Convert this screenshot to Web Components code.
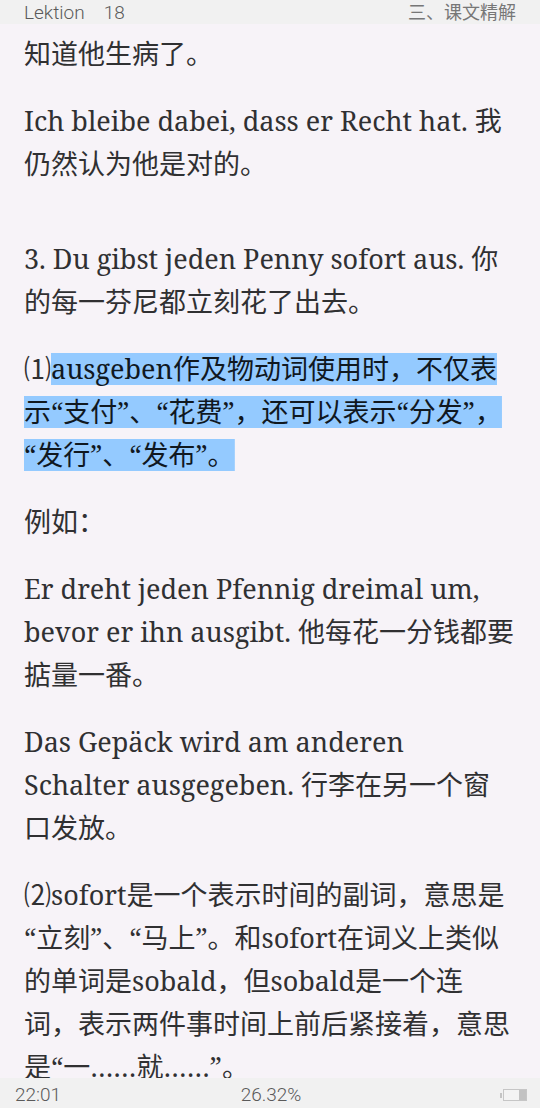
<!DOCTYPE html>
<html lang="zh-CN">
<head>
<meta charset="utf-8">
<meta name="viewport" content="width=device-width, initial-scale=1">
<title>Lektion 18</title>
<style>
    body {
        margin: 0;
    }
</style>
</head>
<body>
<reader-page>
    <reader-bar slot="top">
        <span>Lektion　18</span>
        <span slot="end">三、课文精解</span>
    </reader-bar>

    <reader-paragraph>知道他生病了。</reader-paragraph>
    <reader-paragraph>Ich bleibe dabei, dass er Recht hat. 我仍然认为他是对的。</reader-paragraph>
    <reader-paragraph section>3. Du gibst jeden Penny sofort aus. 你的每一芬尼都立刻花了出去。</reader-paragraph>
    <reader-paragraph>⑴<reader-highlight>ausgeben作及物动词使用时，不仅表示“支付”、“花费”，还可以表示“分发”，“发行”、“发布”。</reader-highlight></reader-paragraph>
    <reader-paragraph>例如：</reader-paragraph>
    <reader-paragraph>Er dreht jeden Pfennig dreimal um, bevor er ihn ausgibt. 他每花一分钱都要掂量一番。</reader-paragraph>
    <reader-paragraph>Das Gepäck wird am anderen Schalter ausgegeben. 行李在另一个窗口发放。</reader-paragraph>
    <reader-paragraph>⑵sofort是一个表示时间的副词，意思是“立刻”、“马上”。和sofort在词义上类似的单词是sobald，但sobald是一个连词，表示两件事时间上前后紧接着，意思是“一……就……”。</reader-paragraph>

    <reader-status slot="bottom">
        <time>22:01</time>
        <span slot="progress">26.32%</span>
        <battery-icon slot="end"></battery-icon>
    </reader-status>
</reader-page>

<script>
class ReaderPage extends HTMLElement {
    constructor() {
        super();
        this.attachShadow({ mode: "open" });
        this.shadowRoot.innerHTML = /*html*/ `
        <style>
            :host {
                --bar-background: #f1f1f1;
                --bar-color: #777;
                --bar-light-color: #5a5a5a;
                --mark-background: #94caff;

                display: flex;
                flex-direction: column;
                height: 100vh;
                background-color: #f7f3f8;
                color: #303032;
                font-family: "Noto Serif", "Droid Serif", "Noto Sans CJK SC", serif;
                font-size: 27px;
                line-height: 43px;
            }
            main {
                flex: 1;
                min-height: 0;
                overflow: hidden;
                padding: 8px 24px 0;
            }
        </style>
        <slot name="top"></slot>
        <main><slot></slot></main>
        <slot name="bottom"></slot>
        `;
    }
}

class ReaderBar extends HTMLElement {
    constructor() {
        super();
        this.attachShadow({ mode: "open" });
        this.shadowRoot.innerHTML = /*html*/ `
        <style>
            :host {
                display: block;
                background-color: var(--bar-background);
                color: var(--bar-color);
                font-family: Roboto, "Noto Sans CJK SC", sans-serif;
                font-size: 18px;
                line-height: 22px;
            }
            header {
                display: flex;
                justify-content: space-between;
                padding: 2px 24px 0;
            }
            .title {
                color: var(--bar-light-color);
                font-size: 19px;
                font-weight: 300;
            }
        </style>
        <header>
            <div class="title"><slot></slot></div>
            <slot name="end"></slot>
        </header>
        `;
    }
}

class ReaderParagraph extends HTMLElement {
    constructor() {
        super();
        this.attachShadow({ mode: "open" });
        this.shadowRoot.innerHTML = /*html*/ `
        <style>
            :host {
                display: block;
                margin-bottom: 24px;
            }
            :host([section]) {
                padding-top: 28px;
            }
            p {
                margin: 0;
            }
        </style>
        <p><slot></slot></p>
        `;
    }
}

class ReaderHighlight extends HTMLElement {
    constructor() {
        super();
        this.attachShadow({ mode: "open" });
        // the band is shorter than the font box, so it is drawn as a gradient
        // no whitespace around <mark>: it would show up inside the line
        this.shadowRoot.innerHTML = /*html*/ `<style>
            :host {
                display: inline;
            }
            mark {
                background: linear-gradient(var(--mark-background), var(--mark-background)) center / 100% 32px no-repeat;
                -webkit-box-decoration-break: clone;
                box-decoration-break: clone;
                color: #10181f;
            }
        </style><mark><slot></slot></mark>`;
    }
}

class ReaderStatus extends HTMLElement {
    constructor() {
        super();
        this.attachShadow({ mode: "open" });
        this.shadowRoot.innerHTML = /*html*/ `
        <style>
            :host {
                display: block;
                background-color: var(--bar-background);
                color: var(--bar-light-color);
                font-family: Roboto, sans-serif;
                font-size: 19px;
                font-weight: 300;
                line-height: 26px;
            }
            footer {
                display: grid;
                grid-template-columns: 1fr auto 1fr;
                align-items: center;
                padding: 4px 13px 0 15px;
            }
            .end {
                display: flex;
                justify-content: flex-end;
            }
        </style>
        <footer>
            <slot></slot>
            <slot name="progress"></slot>
            <div class="end"><slot name="end"></slot></div>
        </footer>
        `;
    }
}

class BatteryIcon extends HTMLElement {
    constructor() {
        super();
        this.attachShadow({ mode: "open" });
        this.shadowRoot.innerHTML = /*html*/ `
        <style>
            :host {
                display: block;
            }
            svg {
                display: block;
                width: 27px;
                height: 14px;
            }
        </style>
        <svg viewBox="0 0 27 14" shape-rendering="crispEdges" aria-hidden="true">
            <rect x="0" y="5" width="2" height="5" fill="#c4c4c4"/>
            <rect x="3" y="1" width="24" height="12" fill="#c6c6c6"/>
            <rect x="4" y="2" width="22" height="10" fill="#f3f3f3"/>
            <rect x="19" y="2" width="7" height="10" fill="#c2c2c2"/>
        </svg>
        `;
    }
}

customElements.define("reader-page", ReaderPage);
customElements.define("reader-bar", ReaderBar);
customElements.define("reader-paragraph", ReaderParagraph);
customElements.define("reader-highlight", ReaderHighlight);
customElements.define("reader-status", ReaderStatus);
customElements.define("battery-icon", BatteryIcon);
</script>
</body>
</html>
